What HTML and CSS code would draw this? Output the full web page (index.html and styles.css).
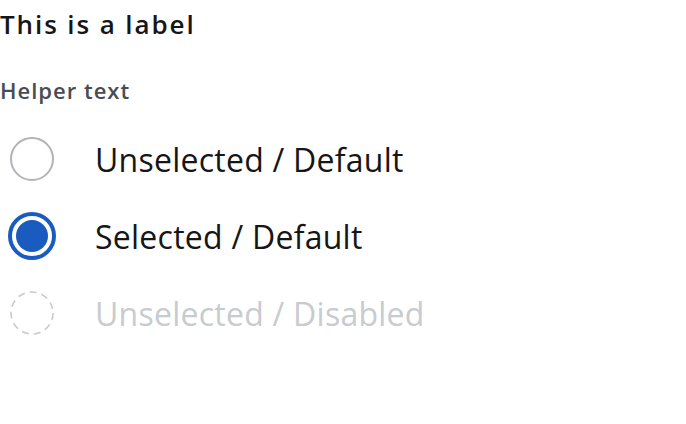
FILE: index.html
```html
<!DOCTYPE html>
<html>
<head>
<meta charset="utf-8">
<link rel="stylesheet" href="styles.css">
</head>
<body>
<div class="group">
  <div class="label">This is a label</div>
  <div class="helper">Helper text</div>
  <div class="options">
    <div class="option">
      <span class="slot"><span class="radio"></span></span>
      <span class="text">Unselected / Default</span>
    </div>
    <div class="option">
      <span class="slot"><span class="radio selected"><span class="dot"></span></span></span>
      <span class="text">Selected / Default</span>
    </div>
    <div class="option disabled">
      <span class="slot">
        <svg class="dashed" width="44" height="44" viewBox="0 0 44 44"><circle cx="22" cy="22" r="21" fill="none" stroke="#c8cbd0" stroke-width="1.6" stroke-dasharray="7 5"/></svg>
      </span>
      <span class="text">Unselected / Disabled</span>
    </div>
  </div>
</div>
</body>
</html>
```
FILE: styles.css
```css
html, body {
  margin: 0;
  padding: 0;
  background: #fff;
}
body {
  font-family: "Open Sans", "Noto Sans", sans-serif;
  color: #161616;
}
.group {
  display: flex;
  flex-direction: column;
}
.label {
  font-size: 26px;
  font-weight: 600;
  line-height: 48px;
  letter-spacing: 1.9px;
}
.helper {
  font-size: 22px;
  font-weight: 600;
  color: #484c54;
  line-height: 40px;
  letter-spacing: 1px;
  margin-top: 22px;
}
.options {
  display: flex;
  flex-direction: column;
  gap: 29px;
  margin-top: 25px;
}
.option {
  display: flex;
  align-items: center;
  height: 48px;
  gap: 39px;
  padding-left: 8px;
}
.slot {
  width: 48px;
  height: 48px;
  flex: none;
  display: flex;
  align-items: center;
  justify-content: center;
}
.radio {
  box-sizing: border-box;
  width: 44px;
  height: 44px;
  border-radius: 50%;
  border: 2px solid #b0b3b8;
  display: flex;
  align-items: center;
  justify-content: center;
}
.radio.selected {
  width: 48px;
  height: 48px;
  border: 4px solid #1a5bbf;
}
.dot {
  width: 32px;
  height: 32px;
  border-radius: 50%;
  background: #1a5bbf;
}
.dashed {
  display: block;
}
.text {
  font-size: 32px;
  font-weight: 400;
  letter-spacing: 0.25px;
}
.disabled .text {
  color: #c8cbd0;
}
```
